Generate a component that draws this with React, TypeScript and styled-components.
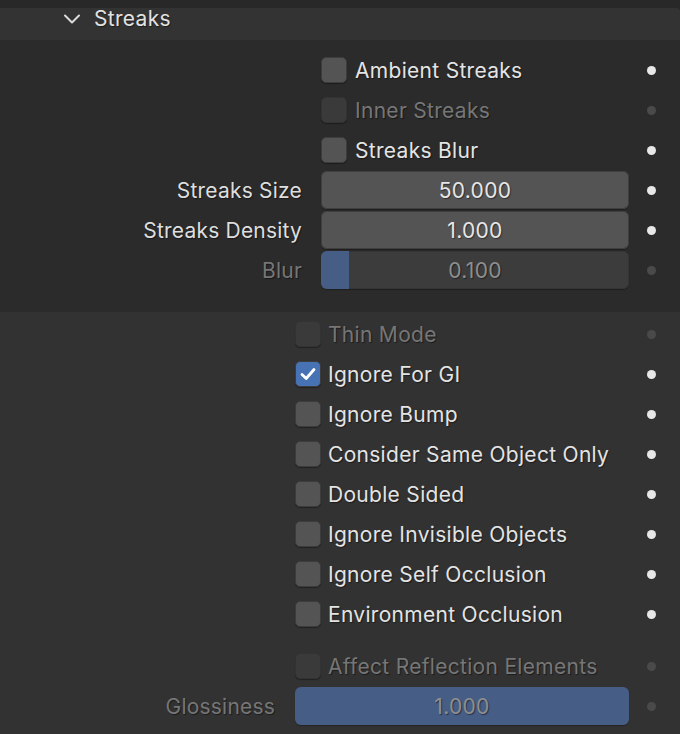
import styled, { createGlobalStyle } from 'styled-components';

const GlobalStyle = createGlobalStyle`
  html, body {
    margin: 0;
    padding: 0;
    background: #282828;
  }
  body {
    font-family: Inter, "Noto Sans", sans-serif;
    -webkit-font-smoothing: antialiased;
  }
`;

type Item =
  | { kind: 'check'; label: string; checked?: boolean; disabled?: boolean }
  | { kind: 'field'; label: string; value: string; fill?: number; disabled?: boolean }
  | { kind: 'spacer' };

const streaks: Item[] = [
  { kind: 'check', label: 'Ambient Streaks' },
  { kind: 'check', label: 'Inner Streaks', disabled: true },
  { kind: 'check', label: 'Streaks Blur' },
  { kind: 'field', label: 'Streaks Size', value: '50.000' },
  { kind: 'field', label: 'Streaks Density', value: '1.000' },
  { kind: 'field', label: 'Blur', value: '0.100', fill: 0.09, disabled: true },
];

const options: Item[] = [
  { kind: 'check', label: 'Thin Mode', disabled: true },
  { kind: 'check', label: 'Ignore For GI', checked: true },
  { kind: 'check', label: 'Ignore Bump' },
  { kind: 'check', label: 'Consider Same Object Only' },
  { kind: 'check', label: 'Double Sided' },
  { kind: 'check', label: 'Ignore Invisible Objects' },
  { kind: 'check', label: 'Ignore Self Occlusion' },
  { kind: 'check', label: 'Environment Occlusion' },
  { kind: 'spacer' },
  { kind: 'check', label: 'Affect Reflection Elements', disabled: true },
  { kind: 'field', label: 'Glossiness', value: '1.000', fill: 1, disabled: true },
];

const Chevron = () => (
  <svg width="18" height="12" viewBox="0 0 18 12">
    <path d="M2 2.5 L9 9.5 L16 2.5" fill="none" stroke="#dcdcdc" strokeWidth="2" strokeLinecap="round" strokeLinejoin="round" />
  </svg>
);

const Tick = () => (
  <svg width="20" height="20" viewBox="0 0 20 20">
    <path d="M4 10.5 L8.2 14.5 L16 5.5" fill="none" stroke="#ffffff" strokeWidth="2.8" strokeLinecap="round" strokeLinejoin="round" />
  </svg>
);

type SectionProps = { items: Item[]; split: number; gap: number; dark?: boolean; pad: string };

const Section = ({ items, split, gap, dark, pad }: SectionProps) => (
  <Panel $dark={dark} $pad={pad}>
    {items.map((item, i) => {
      if (item.kind === 'spacer') return <Spacer key={i} />;
      if (item.kind === 'check') {
        return (
          <Row key={i} $split={split}>
            <span />
            <CheckLine $gap={gap > 19 ? 7 : 8}>
              <Box $checked={item.checked} $disabled={item.disabled}>
                {item.checked && <Tick />}
              </Box>
              <Text $disabled={item.disabled}>{item.label}</Text>
            </CheckLine>
            <Dot $disabled={item.disabled} />
          </Row>
        );
      }
      return (
        <Row key={i} $split={split}>
          <Label $disabled={item.disabled} $gap={gap}>{item.label}</Label>
          <Field $disabled={item.disabled}>
            {item.fill !== undefined && <Fill style={{ width: `${item.fill * 100}%` }} />}
            <Value $disabled={item.disabled}>{item.value}</Value>
          </Field>
          <Dot $disabled={item.disabled} />
        </Row>
      );
    })}
  </Panel>
);

export default function App() {
  return (
    <>
      <GlobalStyle />
      <Page>
        <Header>
          <Chevron />
          <Title>Streaks</Title>
        </Header>
        <Section items={streaks} split={321} gap={19} dark pad="10px 8px 22px 0" />
        <Section items={options} split={295} gap={20} pad="2px 8px 8px 0" />
      </Page>
    </>
  );
}

const Page = styled.div`
  width: 680px;
  height: 734px;
  overflow: hidden;
  background: #282828;
  padding-top: 8px;
  box-sizing: border-box;
`;

const Header = styled.div`
  height: 32px;
  box-sizing: border-box;
  background: #333333;
  display: flex;
  align-items: flex-start;
  gap: 13px;
  padding: 1px 0 0 63px;
  border-radius: 0 4px 0 0;

  svg {
    margin-top: 4px;
  }
`;

const Title = styled.span`
  color: #e2e2e2;
  font-size: 21px;
  line-height: 20px;
  letter-spacing: 0.3px;
  text-shadow: 1px 1px 1px rgba(0, 0, 0, 0.45);
`;

const Panel = styled.div<{ $dark?: boolean; $pad: string }>`
  display: flex;
  flex-direction: column;
  padding: ${(p) => p.$pad};
  background: ${(p) => (p.$dark ? '#2b2b2b' : '#323232')};
`;

const Row = styled.div<{ $split: number }>`
  display: grid;
  grid-template-columns: ${(p) => p.$split}px 1fr 42px;
  height: 40px;
  align-items: center;
`;

const Spacer = styled.div`
  height: 12px;
`;

const CheckLine = styled.div<{ $gap: number }>`
  display: flex;
  align-items: center;
  gap: ${(p) => p.$gap}px;
`;

const Box = styled.div<{ $checked?: boolean; $disabled?: boolean }>`
  width: 26px;
  height: 26px;
  box-sizing: border-box;
  border-radius: 5px;
  display: flex;
  align-items: center;
  justify-content: center;
  background: ${(p) => (p.$checked ? '#4772b3' : p.$disabled ? '#3a3a3a' : '#545454')};
  border: 1px solid ${(p) => (p.$disabled ? '#333333' : '#3d3d3d')};
  box-shadow: 0 1px 1px rgba(0, 0, 0, 0.35);
`;

const Text = styled.span<{ $disabled?: boolean }>`
  font-size: 21px;
  letter-spacing: 0.3px;
  color: ${(p) => (p.$disabled ? '#767676' : '#e4e4e4')};
  text-shadow: 1px 1px 1px rgba(0, 0, 0, 0.45);
  white-space: nowrap;
`;

const Label = styled.div<{ $disabled?: boolean; $gap: number }>`
  text-align: right;
  padding-right: ${(p) => p.$gap}px;
  font-size: 21px;
  letter-spacing: 0.2px;
  color: ${(p) => (p.$disabled ? '#767676' : '#dedede')};
  text-shadow: 1px 1px 1px rgba(0, 0, 0, 0.45);
  white-space: nowrap;
`;

const Field = styled.div<{ $disabled?: boolean }>`
  position: relative;
  height: 38px;
  margin-right: 1px;
  border-radius: 6px;
  overflow: hidden;
  display: flex;
  align-items: center;
  justify-content: center;
  background: ${(p) => (p.$disabled ? '#3c3c3c' : '#545454')};
  box-shadow: inset 0 0 0 1px ${(p) => (p.$disabled ? '#353535' : '#3f3f3f')}, 0 1px 1px rgba(0, 0, 0, 0.3);
`;

const Fill = styled.div`
  position: absolute;
  left: 0;
  top: 0;
  bottom: 0;
  background: #465d86;
`;

const Value = styled.span<{ $disabled?: boolean }>`
  position: relative;
  font-size: 21px;
  letter-spacing: 0.3px;
  color: ${(p) => (p.$disabled ? '#8e8e8e' : '#e6e6e6')};
  text-shadow: 1px 1px 1px rgba(0, 0, 0, 0.45);
`;

const Dot = styled.div<{ $disabled?: boolean }>`
  justify-self: center;
  width: 9px;
  height: 9px;
  border-radius: 50%;
  background: ${(p) => (p.$disabled ? '#4a4a4a' : '#e8e8e8')};
`;
